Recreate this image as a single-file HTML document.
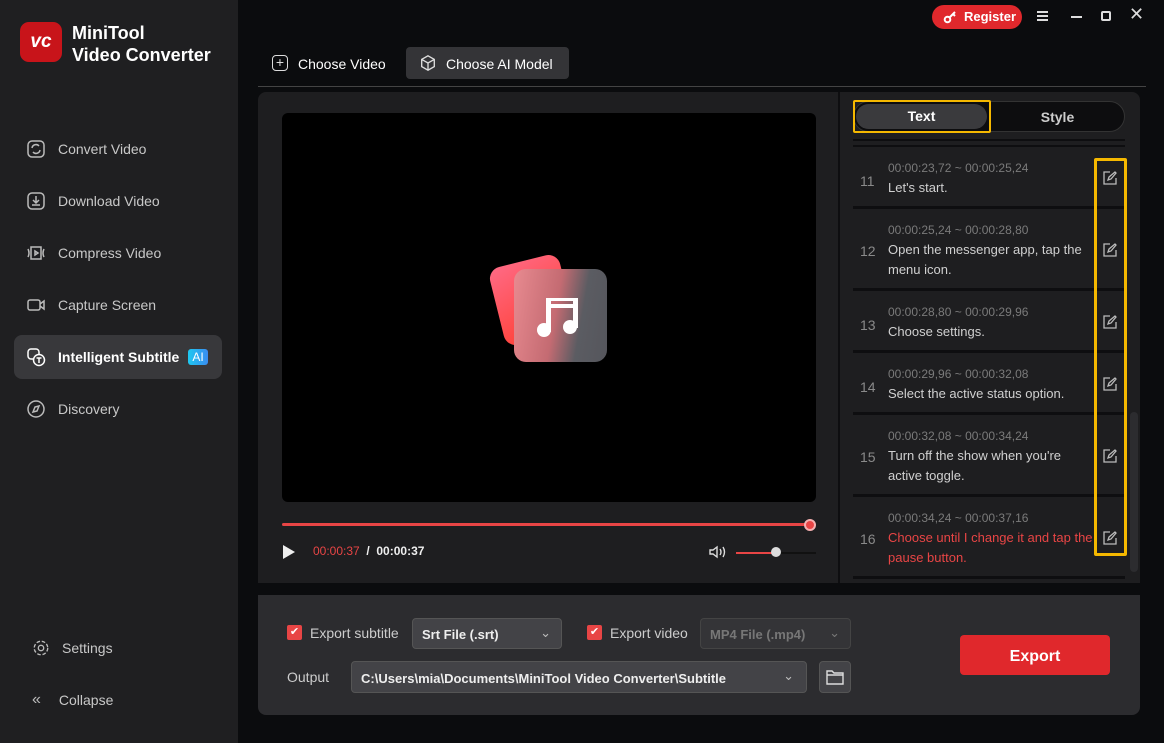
<!DOCTYPE html>
<html><head><meta charset="utf-8"><style>
*{margin:0;padding:0;box-sizing:border-box}
body{width:1164px;height:743px;background:#0b0c0e;font-family:"Liberation Sans",sans-serif;position:relative;overflow:hidden;color:#ddd}
.a{position:absolute}
.side{left:0;top:0;width:238px;height:743px;background:#1f1f21}
.nav{left:14px;width:208px;height:44px;border-radius:8px;font-size:14px;color:#c8c8c8;display:flex;align-items:center;padding-left:12px}
.nav svg{margin-right:12px}
.row{left:853px;width:272px;border-bottom:3px solid #0e0e10}
.num{position:absolute;left:7px;font-size:14px;color:#8a8a8a}
.tm{position:absolute;left:35px;font-size:12px;color:#7a7a7a}
.tx{position:absolute;left:35px;font-size:13px;color:#d0d0d0;line-height:20px;width:205px}
</style></head><body>
<div class="a side"></div>
<div class="a" style="left:20px;top:22px;width:42px;height:40px;border-radius:9px;background:#c8141a;color:#fff;font-weight:bold;font-style:italic;font-size:19px;text-align:center;line-height:40px">vc</div>
<div class="a" style="left:72px;top:22px;font-size:18px;font-weight:bold;color:#fff;line-height:22px">MiniTool<br>Video Converter</div>

<div class="a nav" style="top:127px"><svg width="20" height="20" viewBox="0 0 20 20" fill="none" stroke="#bbb" stroke-width="1.5"><rect x="2" y="2" width="16" height="16" rx="4"/><path d="M6 9a4 4 0 0 1 7-2M14 11a4 4 0 0 1-7 2"/></svg>Convert Video</div>
<div class="a nav" style="top:179px"><svg width="20" height="20" viewBox="0 0 20 20" fill="none" stroke="#bbb" stroke-width="1.5"><rect x="2" y="2" width="16" height="16" rx="4"/><path d="M10 5v7M7 9l3 3 3-3M6 14h8"/></svg>Download Video</div>
<div class="a nav" style="top:231px"><svg width="20" height="20" viewBox="0 0 20 20" fill="none" stroke="#bbb" stroke-width="1.5"><path d="M2 6q2 4 0 8M18 6q-2 4 0 8M5 4h10v12H5zM9 8l3 2-3 2z"/></svg>Compress Video</div>
<div class="a nav" style="top:283px"><svg width="20" height="20" viewBox="0 0 20 20" fill="none" stroke="#bbb" stroke-width="1.5"><rect x="2" y="5" width="12" height="10" rx="2"/><path d="M14 9l4-3v8l-4-3"/></svg>Capture Screen</div>
<div class="a nav" style="top:335px;background:#38383b;color:#fff;font-weight:bold"><svg width="20" height="20" viewBox="0 0 20 20" fill="none" stroke="#fff" stroke-width="1.5"><rect x="2" y="2" width="11" height="10" rx="3"/><circle cx="13" cy="13" r="5.5" fill="#38383b"/><path d="M10.5 11h5M13 11v5"/></svg>Intelligent Subtitle<span style="margin-left:9px;background:linear-gradient(90deg,#1ec8f0,#3a8cf0);color:#fff;font-size:12px;padding:1px 4px;border-radius:3px;font-weight:normal">AI</span></div>
<div class="a nav" style="top:387px"><svg width="20" height="20" viewBox="0 0 20 20" fill="none" stroke="#bbb" stroke-width="1.5"><circle cx="10" cy="10" r="8"/><path d="M7 13l2-5 4-1-2 5z"/></svg>Discovery</div>
<div class="a nav" style="top:626px;left:20px"><svg width="18" height="18" viewBox="0 0 20 20" fill="none" stroke="#bbb" stroke-width="1.5"><circle cx="10" cy="10" r="3"/><circle cx="10" cy="10" r="7.5" stroke-dasharray="4 2"/></svg>Settings</div>
<div class="a nav" style="top:678px;left:20px"><span style="margin-right:18px;font-size:16px;color:#bbb">«</span>Collapse</div>

<div class="a" style="left:932px;top:5px;width:90px;height:24px;border-radius:12px;background:#e0282c;color:#fff;font-size:13px;font-weight:bold;line-height:24px;padding-left:32px">Register</div>
<svg class="a" style="left:943px;top:10px" width="14" height="14" viewBox="0 0 14 14" fill="none" stroke="#fff" stroke-width="2"><circle cx="4.5" cy="9.5" r="2.8"/><path d="M6.5 7.5L12 2M10 4l2 2"/></svg>
<div class="a" style="left:1037px;top:11px;width:11px;height:2px;background:#ddd;box-shadow:0 4px #ddd,0 8px #ddd"></div>
<div class="a" style="left:1071px;top:16px;width:11px;height:2px;background:#ddd"></div>
<div class="a" style="left:1101px;top:11px;width:10px;height:10px;border:2px solid #ddd;border-radius:2px"></div>
<div class="a" style="left:1129px;top:4px;color:#ddd;font-size:18px">✕</div>

<div class="a" style="left:272px;top:55px;width:16px;height:16px;border:1.5px solid #ddd;border-radius:4px;text-align:center;line-height:12px;font-size:14px;color:#ddd">+</div>
<div class="a" style="left:298px;top:56px;font-size:14px;color:#fff">Choose Video</div>
<div class="a" style="left:406px;top:47px;width:163px;height:32px;background:#343437;border-radius:4px"></div>
<svg class="a" style="left:419px;top:54px" width="18" height="18" viewBox="0 0 20 20" fill="none" stroke="#ddd" stroke-width="1.5"><path d="M10 2l7 4v8l-7 4-7-4V6zM3 6l7 4 7-4M10 10v8"/></svg>
<div class="a" style="left:446px;top:56px;font-size:14px;color:#fff">Choose AI Model</div>
<div class="a" style="left:258px;top:86px;width:888px;height:1px;background:#444"></div>

<div class="a" style="left:258px;top:92px;width:882px;height:491px;background:#1e1e20;border-radius:8px 8px 0 0"></div>
<div class="a" style="left:282px;top:113px;width:534px;height:389px;background:#000;border-radius:6px"></div>
<div class="a" style="left:496px;top:260px;width:72px;height:80px;border-radius:12px;background:linear-gradient(160deg,#ff6a85,#ff3a2a);transform:rotate(-14deg)"></div>
<div class="a" style="left:514px;top:269px;width:93px;height:93px;border-radius:12px;background:linear-gradient(100deg,#e88a90,#c46b72 45%,#5b5c62 70%,#55565c)"></div>
<svg class="a" style="left:534px;top:292px" width="50" height="48" viewBox="0 0 50 48" fill="#fff"><path d="M12 6h32v30h-5V16H17v24h-5zM17 9v3h22V9z"/><circle cx="10" cy="38" r="7"/><circle cx="36" cy="35" r="7"/></svg>
<div class="a" style="left:838px;top:92px;width:2px;height:491px;background:#0e0e10"></div>
<div class="a" style="left:282px;top:523px;width:528px;height:3px;background:#e84545;border-radius:2px"></div>
<div class="a" style="left:804px;top:519px;width:12px;height:12px;border-radius:6px;background:#e84545;border:2px solid #f5b0b0"></div>
<div class="a" style="left:283px;top:545px;width:0;height:0;border-left:12px solid #eee;border-top:7px solid transparent;border-bottom:7px solid transparent"></div>
<div class="a" style="left:313px;top:544px;font-size:12px;color:#e84545">00:00:37 <span style="color:#eee;font-weight:bold">&nbsp;/&nbsp; 00:00:37</span></div>
<svg class="a" style="left:709px;top:545px" width="18" height="14" viewBox="0 0 18 14" fill="none" stroke="#ddd" stroke-width="1.4"><path d="M1 5h3l4-3v10l-4-3H1zM11 4q2 3 0 6M14 2q3 5 0 10"/></svg>
<div class="a" style="left:736px;top:552px;width:80px;height:2px;background:#111"></div>
<div class="a" style="left:736px;top:552px;width:40px;height:2px;background:#e84545"></div>
<div class="a" style="left:771px;top:547px;width:10px;height:10px;border-radius:5px;background:#ddd"></div>

<div class="a" style="left:853px;top:101px;width:272px;height:31px;border-radius:16px;background:#0d0d0f;border:1px solid #333"></div>
<div class="a" style="left:856px;top:104px;width:131px;height:25px;border-radius:13px;background:#3a3a3d;text-align:center;line-height:25px;font-size:14px;font-weight:bold;color:#fff">Text</div>
<div class="a" style="left:853px;top:100px;width:138px;height:33px;border:2px solid #f5b800;border-radius:2px"></div>
<div class="a" style="left:990px;top:109px;width:135px;text-align:center;font-size:14px;font-weight:bold;color:#ccc">Style</div>
<div class="a" style="left:853px;top:139px;width:272px;height:2px;background:#0e0e10"></div>
<div class="a" style="left:853px;top:145px;width:272px;height:2px;background:#0e0e10"></div>

<div class="a row" style="top:147px;height:62px"><span class="num" style="top:26px">11</span><span class="tm" style="top:14px">00:00:23,72 ~ 00:00:25,24</span><span class="tx" style="top:31px">Let's start.</span></div>
<div class="a row" style="top:209px;height:82px"><span class="num" style="top:34px">12</span><span class="tm" style="top:14px">00:00:25,24 ~ 00:00:28,80</span><span class="tx" style="top:31px">Open the messenger app, tap the menu icon.</span></div>
<div class="a row" style="top:291px;height:62px"><span class="num" style="top:26px">13</span><span class="tm" style="top:14px">00:00:28,80 ~ 00:00:29,96</span><span class="tx" style="top:31px">Choose settings.</span></div>
<div class="a row" style="top:353px;height:62px"><span class="num" style="top:26px">14</span><span class="tm" style="top:14px">00:00:29,96 ~ 00:00:32,08</span><span class="tx" style="top:31px">Select the active status option.</span></div>
<div class="a row" style="top:415px;height:82px"><span class="num" style="top:34px">15</span><span class="tm" style="top:14px">00:00:32,08 ~ 00:00:34,24</span><span class="tx" style="top:31px">Turn off the show when you're active toggle.</span></div>
<div class="a row" style="top:497px;height:82px"><span class="num" style="top:34px">16</span><span class="tm" style="top:14px">00:00:34,24 ~ 00:00:37,16</span><span class="tx" style="top:31px;color:#e84545;width:215px">Choose until I change it and tap the pause button.</span></div>

<div class="a" style="left:1094px;top:158px;width:33px;height:398px;border:3px solid #f5b800;border-radius:2px"></div>
<svg class="a" style="left:1103px;top:171px" width="14" height="14" viewBox="0 0 14 14" fill="none" stroke="#bbb" stroke-width="1.3"><path d="M7 1H1v12h12V7M5 9l1-3 6-5 1 1-5 6z"/></svg>
<svg class="a" style="left:1103px;top:243px" width="14" height="14" viewBox="0 0 14 14" fill="none" stroke="#bbb" stroke-width="1.3"><path d="M7 1H1v12h12V7M5 9l1-3 6-5 1 1-5 6z"/></svg>
<svg class="a" style="left:1103px;top:315px" width="14" height="14" viewBox="0 0 14 14" fill="none" stroke="#bbb" stroke-width="1.3"><path d="M7 1H1v12h12V7M5 9l1-3 6-5 1 1-5 6z"/></svg>
<svg class="a" style="left:1103px;top:377px" width="14" height="14" viewBox="0 0 14 14" fill="none" stroke="#bbb" stroke-width="1.3"><path d="M7 1H1v12h12V7M5 9l1-3 6-5 1 1-5 6z"/></svg>
<svg class="a" style="left:1103px;top:449px" width="14" height="14" viewBox="0 0 14 14" fill="none" stroke="#bbb" stroke-width="1.3"><path d="M7 1H1v12h12V7M5 9l1-3 6-5 1 1-5 6z"/></svg>
<svg class="a" style="left:1103px;top:531px" width="14" height="14" viewBox="0 0 14 14" fill="none" stroke="#bbb" stroke-width="1.3"><path d="M7 1H1v12h12V7M5 9l1-3 6-5 1 1-5 6z"/></svg>
<div class="a" style="left:1130px;top:412px;width:8px;height:160px;border-radius:4px;background:#2c2c2f"></div>

<div class="a" style="left:258px;top:595px;width:882px;height:120px;background:#2c2c2f;border-radius:0 0 8px 8px"></div>
<div class="a" style="left:287px;top:625px;width:15px;height:15px;background:#e84545;border-radius:2px;color:#fff;font-size:11px;text-align:center;line-height:15px">✔</div>
<div class="a" style="left:310px;top:625px;font-size:14px;color:#ccc">Export subtitle</div>
<div class="a" style="left:412px;top:618px;width:150px;height:31px;background:#434347;border:1px solid #555;border-radius:4px;font-size:13px;font-weight:bold;color:#eee;padding:8px 0 0 9px">Srt File (.srt)<span style="position:absolute;right:10px;top:6px;font-weight:normal;color:#bbb">⌄</span></div>
<div class="a" style="left:587px;top:625px;width:15px;height:15px;background:#e84545;border-radius:2px;color:#fff;font-size:11px;text-align:center;line-height:15px">✔</div>
<div class="a" style="left:610px;top:625px;font-size:14px;color:#ccc">Export video</div>
<div class="a" style="left:700px;top:618px;width:151px;height:31px;background:#343437;border:1px solid #444;border-radius:4px;font-size:13px;font-weight:bold;color:#777;padding:8px 0 0 9px">MP4 File (.mp4)<span style="position:absolute;right:10px;top:6px;font-weight:normal">⌄</span></div>
<div class="a" style="left:287px;top:669px;font-size:14px;color:#ccc">Output</div>
<div class="a" style="left:351px;top:661px;width:456px;height:32px;background:#434347;border:1px solid #555;border-radius:4px;font-size:13px;font-weight:bold;color:#eee;padding:9px 0 0 9px">C:\Users\mia\Documents\MiniTool Video Converter\Subtitle<span style="position:absolute;right:12px;top:6px;font-weight:normal;color:#bbb">⌄</span></div>
<div class="a" style="left:819px;top:661px;width:32px;height:32px;background:#434347;border:1px solid #555;border-radius:4px"></div>
<svg class="a" style="left:826px;top:669px" width="18" height="16" viewBox="0 0 18 16" fill="none" stroke="#ddd" stroke-width="1.4"><path d="M1 2h5l2 2h9v11H1zM1 6h16"/></svg>
<div class="a" style="left:960px;top:635px;width:150px;height:40px;background:#e0282c;border-radius:4px;color:#fff;font-size:16px;font-weight:bold;text-align:center;line-height:44px">Export</div>
</body></html>
